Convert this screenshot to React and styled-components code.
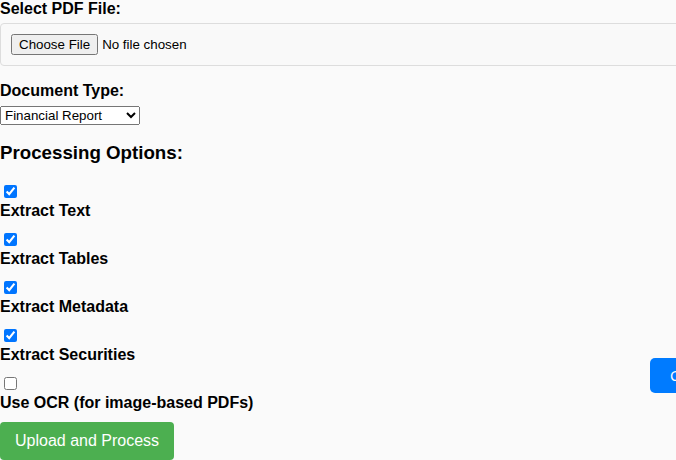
import React from "react";
import styled, { createGlobalStyle } from "styled-components";

const GlobalStyle = createGlobalStyle`
  html, body {
    margin: 0;
    padding: 0;
    background: #fafafa;
    overflow: hidden;
  }
  body {
    font-family: "Liberation Sans", Arial, sans-serif;
    color: #000;
  }
`;

const Page = styled.div`
  position: relative;
  width: 820px;
  height: 460px;
`;

const Form = styled.form`
  display: block;
`;

const FieldLabel = styled.label`
  display: block;
  font-size: 16px;
  font-weight: bold;
  line-height: 18px;
  margin-bottom: 5px;
`;

const FileBox = styled.div`
  border: 1px solid #ddd;
  border-radius: 4px;
  background: #f9f9f9;
  padding: 10px;
  margin-bottom: 16px;
`;

const FileInput = styled.input`
  font-family: "Liberation Sans", Arial, sans-serif;
  font-size: 13.33px;
`;

const Select = styled.select`
  width: 140px;
  font-family: "Liberation Sans", Arial, sans-serif;
  font-size: 13.33px;
  margin-top: 1px;
`;

const SectionTitle = styled.h3`
  font-size: 18.72px;
  font-weight: bold;
  line-height: 21.5px;
  margin: 17px 0 18.5px;
`;

const Option = styled.div`
  display: flex;
  flex-direction: column;
  align-items: flex-start;
  margin-bottom: 10px;
`;

const Checkbox = styled.input`
  width: 13px;
  height: 13px;
  margin: 3px 3px 4px 4px;
`;

const OptionLabel = styled.label`
  font-size: 16px;
  font-weight: bold;
  line-height: 18px;
`;

const SubmitButton = styled.button`
  background: #4caf50;
  color: #fff;
  border: none;
  border-radius: 4px;
  padding: 10px 15px;
  font-family: "Liberation Sans", Arial, sans-serif;
  font-size: 16px;
  line-height: 18px;
  cursor: pointer;
`;

const FloatingButton = styled.button`
  position: absolute;
  left: 650px;
  top: 358px;
  height: 35px;
  padding: 0 20px;
  white-space: nowrap;
  background: #007bff;
  color: #fff;
  border: none;
  border-radius: 5px;
  font-family: "Noto Sans", "DejaVu Sans", sans-serif;
  font-size: 14px;
  cursor: pointer;
`;

const options = [
  { id: "text", label: "Extract Text", checked: true },
  { id: "tables", label: "Extract Tables", checked: true },
  { id: "metadata", label: "Extract Metadata", checked: true },
  { id: "securities", label: "Extract Securities", checked: true },
  { id: "ocr", label: "Use OCR (for image-based PDFs)", checked: false },
];

export default function App() {
  return (
    <Page>
      <GlobalStyle />
      <Form onSubmit={(e) => e.preventDefault()}>
        <FieldLabel htmlFor="pdf">Select PDF File:</FieldLabel>
        <FileBox>
          <FileInput id="pdf" type="file" accept=".pdf" />
        </FileBox>

        <FieldLabel htmlFor="doctype">Document Type:</FieldLabel>
        <Select id="doctype" defaultValue="financial">
          <option value="financial">Financial Report</option>
          <option value="portfolio">Portfolio Statement</option>
          <option value="other">Other</option>
        </Select>

        <SectionTitle>Processing Options:</SectionTitle>
        {options.map((opt) => (
          <Option key={opt.id}>
            <Checkbox type="checkbox" id={opt.id} defaultChecked={opt.checked} />
            <OptionLabel htmlFor={opt.id}>{opt.label}</OptionLabel>
          </Option>
        ))}

        <SubmitButton type="submit">Upload and Process</SubmitButton>
      </Form>
      <FloatingButton type="button">Chat</FloatingButton>
    </Page>
  );
}
